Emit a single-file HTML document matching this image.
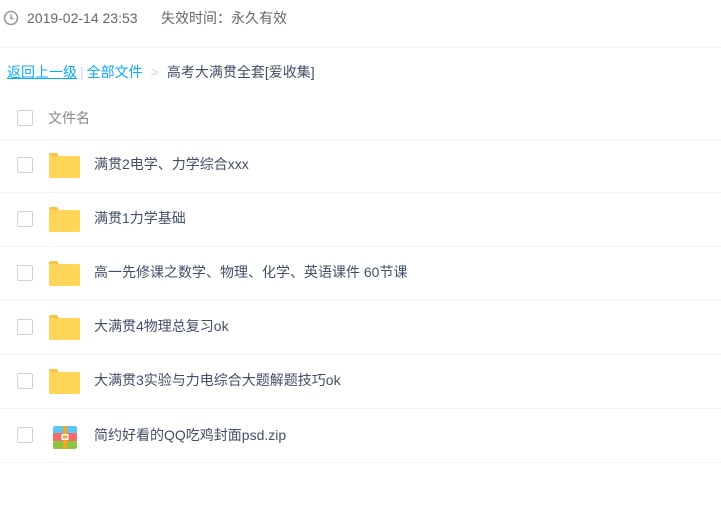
<!DOCTYPE html>
<html><head><meta charset="utf-8"><style>
*{margin:0;padding:0;box-sizing:border-box}
body{width:721px;height:512px;background:#fff;font-family:"Liberation Sans","Noto Sans CJK SC",sans-serif;font-size:14px;color:#424e67;position:relative;overflow:hidden}
.abs{position:absolute;white-space:nowrap;line-height:18px}
.line{position:absolute;left:0;width:721px;height:1px;background:#f1f4f9}
.cb{position:absolute;left:17px;width:16px;height:16px;border:1px solid #cdd3dd;border-radius:2px;background:#fff}
.folder{position:absolute;left:49px;width:31px;height:25px}
</style></head><body>
<svg class="abs" style="left:3px;top:10px" width="16" height="16" viewBox="0 0 16 16"><circle cx="8" cy="8" r="6.5" fill="none" stroke="#999" stroke-width="1.6"/><path d="M8 4.5V8.5H10.5" fill="none" stroke="#999" stroke-width="1.5"/></svg>
<div class="abs" style="left:27px;top:9px;color:#666;font-size:14px">2019-02-14 23:53</div>
<div class="abs" style="left:161px;top:9px;color:#666;font-size:14px">失效时间：永久有效</div>
<div class="line" style="top:47px"></div>
<div class="abs" style="left:7px;top:63px;color:#09aaff"><span style="text-decoration:underline">返回上一级</span><span style="color:#c5d8f3;margin:0 3px">|</span>全部文件<span style="color:#c5d8f3;margin:0 8px">&gt;</span><span style="color:#424e67">高考大满贯全套[爱收集]</span></div>
<div class="cb" style="top:110px"></div>
<div class="abs" style="left:48px;top:109px;color:#888">文件名</div>
<div class="line" style="top:139px"></div>
<div class="line" style="top:192px"></div>
<div class="line" style="top:246px"></div>
<div class="line" style="top:300px"></div>
<div class="line" style="top:354px"></div>
<div class="line" style="top:408px"></div>
<div class="line" style="top:462px"></div>

<div class="cb" style="top:157px"></div>
<svg class="folder" style="top:153px" viewBox="0 0 31 25"><path d="M0 2a2 2 0 0 1 2-2h6l2 3H0z" fill="#f3c64a"/><rect x="0" y="3" width="31" height="22" rx="1.5" fill="#ffd65a"/></svg>
<div class="abs" style="left:94px;top:155px">满贯2电学、力学综合xxx</div>

<div class="cb" style="top:211px"></div>
<svg class="folder" style="top:207px" viewBox="0 0 31 25"><path d="M0 2a2 2 0 0 1 2-2h6l2 3H0z" fill="#f3c64a"/><rect x="0" y="3" width="31" height="22" rx="1.5" fill="#ffd65a"/></svg>
<div class="abs" style="left:94px;top:209px">满贯1力学基础</div>

<div class="cb" style="top:265px"></div>
<svg class="folder" style="top:261px" viewBox="0 0 31 25"><path d="M0 2a2 2 0 0 1 2-2h6l2 3H0z" fill="#f3c64a"/><rect x="0" y="3" width="31" height="22" rx="1.5" fill="#ffd65a"/></svg>
<div class="abs" style="left:94px;top:263px">高一先修课之数学、物理、化学、英语课件 60节课</div>

<div class="cb" style="top:319px"></div>
<svg class="folder" style="top:315px" viewBox="0 0 31 25"><path d="M0 2a2 2 0 0 1 2-2h6l2 3H0z" fill="#f3c64a"/><rect x="0" y="3" width="31" height="22" rx="1.5" fill="#ffd65a"/></svg>
<div class="abs" style="left:94px;top:317px">大满贯4物理总复习ok</div>

<div class="cb" style="top:373px"></div>
<svg class="folder" style="top:369px" viewBox="0 0 31 25"><path d="M0 2a2 2 0 0 1 2-2h6l2 3H0z" fill="#f3c64a"/><rect x="0" y="3" width="31" height="22" rx="1.5" fill="#ffd65a"/></svg>
<div class="abs" style="left:94px;top:371px">大满贯3实验与力电综合大题解题技巧ok</div>

<div class="cb" style="top:427px"></div>
<svg class="abs" style="left:53px;top:426px" width="24" height="23" viewBox="0 0 24 23"><rect x="0" y="0" width="24" height="8" rx="2" fill="#5ac8f5"/><rect x="0" y="7" width="24" height="8" fill="#f76a6a"/><rect x="0" y="15" width="24" height="8" rx="2" fill="#8cc63f"/><rect x="10" y="0" width="4" height="23" fill="#f5a623"/><rect x="8.5" y="8" width="7" height="6" fill="#fff"/><rect x="10" y="9.5" width="4" height="3" fill="#f5a623"/></svg>
<div class="abs" style="left:94px;top:426px">简约好看的QQ吃鸡封面psd.zip</div>
</body></html>
